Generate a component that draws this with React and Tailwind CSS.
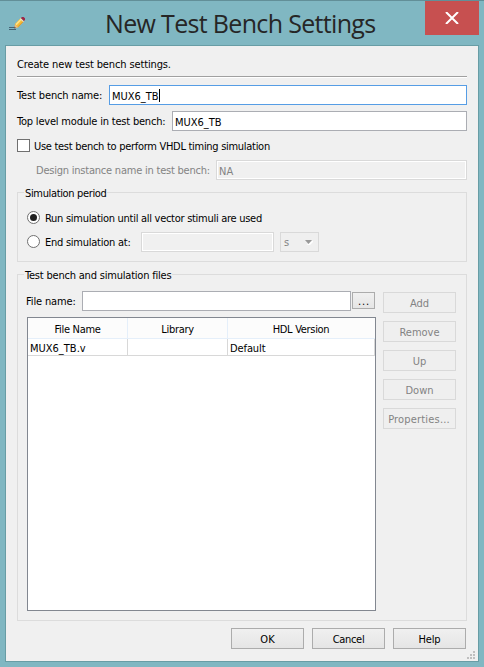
const ui = 'font-["DejaVu_Sans_Condensed","DejaVu_Sans",sans-serif] [font-stretch:condensed]';

function Field({ className = '', disabled = false, focused = false, children }) {
  const look = disabled
    ? 'border-[#d9d9d9] bg-[#f0f0f0] text-[#838383] shadow-[inset_0_0_0_1px_#ffffff]'
    : focused
      ? 'border-[#569de5] bg-white'
      : 'border-[#abadb3] bg-white';
  return (
    <div className={`flex h-5 shrink-0 items-center border pt-1 pl-[2px] ${look} ${className}`}>{children}</div>
  );
}

function Button({ className = '', disabled = false, children }) {
  const look = disabled
    ? 'border-[#d9d9d9] bg-[#efefef] text-[#838383]'
    : 'border-[#acacac] bg-linear-to-b from-[#f0f0f0] to-[#e5e5e5]';
  return (
    <button className={`flex h-[21px] w-[73px] shrink-0 items-center justify-center border pt-[3px] ${look} ${className}`}>
      {children}
    </button>
  );
}

function Radio({ checked }) {
  return (
    <span className="flex size-[13px] shrink-0 items-center justify-center rounded-full border border-[#707070] bg-white">
      {checked && <span className="size-[7px] rounded-full bg-[#212121]" />}
    </span>
  );
}

function Group({ title, titleClass, className, children }) {
  return (
    <section className={`relative w-[450px] border border-[#dcdcdc] ${className}`}>
      <h2 className={`absolute -top-[6px] left-[6px] bg-[#f0f0f0] px-px leading-[14px] ${titleClass}`}>{title}</h2>
      {children}
    </section>
  );
}

function PencilIcon() {
  return (
    <svg width="16" height="16" viewBox="0 0 16 16" className="shrink-0">
      <path d="M0 11.500h6M0 13.500h7" stroke="#456273" />
      <path d="M5.500 12L6 8L11.700 2L15 5.200L9.300 11.200z" fill="#f6bc35" />
      <path d="M7 8.600L12.200 3.200" stroke="#ffe38a" strokeWidth="1.600" />
      <path d="M9.200 10.700L14.500 5.200" stroke="#d58a2c" strokeWidth="0.800" />
      <path d="M5.300 12.200L6 8.400L9 11.200z" fill="#e9b98a" />
      <path d="M5 12.500l.4-2 1.700 1.600z" fill="#5c4a4a" />
      <path d="M11.400 2.600l3.100 3" stroke="#dfe3dc" strokeWidth="1.100" />
      <path d="M11.900 2.100L13 1h1.600L16 2.300v1.600L14.900 5z" fill="#9c2848" />
    </svg>
  );
}

const actions = [
  ['Add', ''],
  ['Remove', ''],
  ['Up', ''],
  ['Down', ''],
  ['Properties...', 'pr-px tracking-[0.18px]'],
];

export default function App() {
  return (
    <div className={`h-[667px] w-[484px] overflow-hidden border-t border-[#628f98] bg-[#80b7c2] text-[11px] leading-[14px] whitespace-nowrap text-black ${ui}`}>
      <header className="flex h-11 items-start pl-[9px]">
        <div className="mt-[15px]"><PencilIcon /></div>
        <h1 className='mt-1 ml-[80px] w-[320px] font-["Open_Sans",sans-serif] text-[25px] leading-[36px] tracking-[-0.67px] text-[#262626] [font-stretch:normal]'>
          New Test Bench Settings
        </h1>
        <button aria-label="Close" className="flex h-[34px] w-[54px] items-center justify-center bg-[#c75050]">
          <svg width="14" height="12" viewBox="0 0 14 12">
            <path d="M1 0L13 12M13 0L1 12" stroke="#fff" strokeWidth="2" />
          </svg>
        </button>
      </header>

      <main className="ml-[5px] flex h-[617px] w-[474px] flex-col border border-[#689da5] bg-[#f0f0f0] pl-[11px]">
        <p className="mt-3 h-[18px] tracking-[-0.13px]">Create new test bench settings.</p>
        <div className="h-[2px] w-[450px] shrink-0 border-t border-b border-t-[#a0a0a0] border-b-white" />

        <div className="mt-[7px] flex h-5 w-[450px] items-center">
          <label className="w-[92px] pt-[2px] tracking-[-0.13px]">Test bench name:</label>
          <Field focused className="w-[358px]">
            <span>MUX6_TB</span>
            <span className="-mt-[3px] h-[13px] w-px bg-black" />
          </Field>
        </div>
        <div className="mt-[6px] flex h-5 w-[450px] items-center">
          <label className="w-[155px] pt-[2px] tracking-[-0.2px]">Top level module in test bench:</label>
          <Field className="w-[295px]">MUX6_TB</Field>
        </div>
        <label className="mt-2 flex h-[13px] items-center gap-1">
          <span className="size-[13px] border border-[#707070] bg-white" />
          <span className="pt-[2px] leading-[15px] tracking-[-0.29px]">Use test bench to perform VHDL timing simulation</span>
        </label>
        <div className="mt-2 flex h-5 w-[450px] items-center pl-[19px]">
          <label className="w-[180px] pt-[2px] tracking-[-0.22px] text-[#838383]">Design instance name in test bench:</label>
          <Field disabled className="w-[251px]">NA</Field>
        </div>

        <Group title="Simulation period" titleClass="tracking-[-0.35px]" className="mt-3 h-[70px] pt-[18px] pl-[9px]">
          <label className="flex h-[13px] items-center gap-[5px]">
            <Radio checked />
            <span className="pt-[2px] leading-[15px] tracking-[-0.28px]">Run simulation until all vector stimuli are used</span>
          </label>
          <div className="mt-2 flex h-5 items-center">
            <label className="mb-px flex h-[13px] w-[114px] items-center gap-[5px]">
              <Radio />
              <span className="pt-[2px] leading-[15px] tracking-[-0.25px]">End simulation at:</span>
            </label>
            <Field disabled className="w-[133px]" />
            <div className="ml-[6px] flex h-5 w-[39px] items-center justify-between border border-[#d9d9d9] bg-[#efefef] pr-[5px] pl-[3px] text-[#838383]">
              <span className="pt-[2px]">s</span>
              <svg width="8" height="5" viewBox="0 0 8 5">
                <path d="M1.500 5L8 .5V2L5 5z" fill="#fff" />
                <path d="M0 0h7L3.500 4z" fill="#999" />
              </svg>
            </div>
          </div>
        </Group>

        <Group title="Test bench and simulation files" titleClass="tracking-[-0.2px]" className="mt-3 h-[347px] pt-4 pl-[9px]">
          <div className="flex gap-[7px]">
            <div className="w-[349px]">
              <div className="flex h-5 items-center">
                <label className="-ml-px w-[56px] pt-[2px] tracking-[-0.13px]">File name:</label>
                <Field className="w-[269px]" />
                <Button className="mb-px ml-px h-[17px]! w-[23px]! pl-px tracking-[0.8px]">...</Button>
              </div>
              <div className="mt-[6px] h-[294px] w-[349px] border border-[#828790] bg-white">
                <div className="grid h-[21px] grid-cols-[100px_100px_147px] grid-rows-[20px] border-b border-[#e5effa] bg-[#fcfcfc] text-center leading-[24px] tracking-[-0.3px]">
                  <div className="border-r border-[#e5effa]">File Name</div>
                  <div className="border-r border-[#e5effa]">Library</div>
                  <div className="pr-px">HDL Version</div>
                </div>
                <div className="grid h-[17px] grid-cols-[100px_100px_147px] grid-rows-[16px] border-b border-[#d8d8d8] leading-[20px]">
                  <div className="border-r border-[#d8d8d8] pl-[2px]">MUX6_TB.v</div>
                  <div className="border-r border-[#d8d8d8]" />
                  <div className="border-r border-[#d8d8d8] pl-[2px] tracking-[-0.1px]">Default</div>
                </div>
              </div>
            </div>
            <div className="mt-px flex flex-col gap-2">
              {actions.map(([name, cls]) => (
                <Button key={name} disabled className={cls}>{name}</Button>
              ))}
            </div>
          </div>
        </Group>

        <footer className="mt-[7px] flex w-[450px] justify-end gap-2 pr-px">
          <Button>OK</Button>
          <Button className="tracking-[-0.3px]">Cancel</Button>
          <Button className="tracking-[-0.2px]">Help</Button>
        </footer>
        <svg width="8" height="8" viewBox="0 0 8 8" className="mt-[2px] mr-[3px] shrink-0 self-end" fill="#bfbfbf">
          <path d="M6 0h2v2H6zM3 3h2v2H3zM6 3h2v2H6zM0 6h2v2H0zM3 6h2v2H3zM6 6h2v2H6z" />
        </svg>
      </main>
    </div>
  );
}
